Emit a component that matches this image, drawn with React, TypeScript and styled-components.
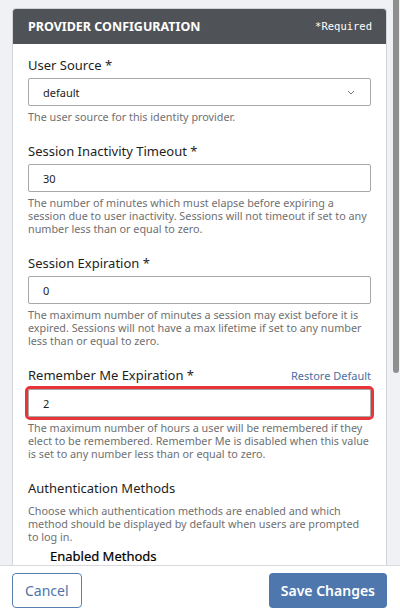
import styled, { createGlobalStyle } from "styled-components";

const GlobalStyle = createGlobalStyle`
  html, body {
    margin: 0;
    padding: 0;
    background: #f0f1f4;
    font-family: "Noto Sans", "Open Sans", sans-serif;
  }
`;

type Field = {
  label: string;
  value: string;
  help: string;
  restore?: boolean;
  invalid?: boolean;
};

const fields: Field[] = [
  {
    label: "Session Inactivity Timeout *",
    value: "30",
    help: "The number of minutes which must elapse before expiring a session due to user inactivity. Sessions will not timeout if set to any number less than or equal to zero.",
  },
  {
    label: "Session Expiration *",
    value: "0",
    help: "The maximum number of minutes a session may exist before it is expired. Sessions will not have a max lifetime if set to any number less than or equal to zero.",
  },
  {
    label: "Remember Me Expiration *",
    value: "2",
    help: "The maximum number of hours a user will be remembered if they elect to be remembered. Remember Me is disabled when this value is set to any number less than or equal to zero.",
    restore: true,
    invalid: true,
  },
];

const methods = ["Username / Password", "Security Key", "Authenticator App"];

export default function App() {
  return (
    <Page>
      <GlobalStyle />
      <Main>
        <Scroller>
          <Panel>
            <Header>
              <Title>Provider Configuration</Title>
              <Required>*Required</Required>
            </Header>
            <Body>
              <Group>
                <LabelRow>
                  <Label>User Source *</Label>
                </LabelRow>
                <Select>
                  <span>default</span>
                  <svg width="8" height="5" viewBox="0 0 8 5">
                    <path d="M1 1 L4 4 L7 1" fill="none" stroke="#777" strokeWidth="1" />
                  </svg>
                </Select>
                <Help>The user source for this identity provider.</Help>
              </Group>
              {fields.map((f) => (
                <Group key={f.label}>
                  <LabelRow>
                    <Label>{f.label}</Label>
                    {f.restore && <Restore>Restore Default</Restore>}
                  </LabelRow>
                  <Input defaultValue={f.value} invalid={!!f.invalid} />
                  <Help>{f.help}</Help>
                </Group>
              ))}
              <Group>
                <LabelRow>
                  <Label>Authentication Methods</Label>
                </LabelRow>
                <SectionHelp>
                  Choose which authentication methods are enabled and which method should be displayed by default when users are prompted to log in.
                </SectionHelp>
                <SubSection>
                  <SubTitle>Enabled Methods</SubTitle>
                  {methods.map((m) => (
                    <Check key={m}>
                      <Box />
                      {m}
                    </Check>
                  ))}
                </SubSection>
              </Group>
            </Body>
          </Panel>
        </Scroller>
        <Track>
          <Thumb />
        </Track>
      </Main>
      <Footer>
        <Cancel>Cancel</Cancel>
        <Save>Save Changes</Save>
      </Footer>
    </Page>
  );
}

const Page = styled.div`
  display: flex;
  flex-direction: column;
  height: 610px;
  overflow: hidden;
`;

const Main = styled.div`
  flex: 1;
  display: flex;
  min-height: 0;
`;

const Scroller = styled.div`
  flex: 1;
  overflow: hidden;
  padding: 8px 0 0 12px;
`;

const Track = styled.div`
  width: 13px;
  box-sizing: border-box;
  padding-left: 6px;
  background: #f0f1f4;
`;

const Thumb = styled.div`
  width: 6px;
  height: 373px;
  background: #8f8f8f;
  border-radius: 0 0 3px 3px;
`;

const Panel = styled.div`
  background: #fff;
  border: 1px solid #d2d4d8;
  border-bottom: none;
  border-radius: 4px 4px 0 0;
  overflow: hidden;
`;

const Header = styled.div`
  display: flex;
  align-items: center;
  justify-content: space-between;
  height: 36px;
  padding: 0 15px 0 16px;
  background: #4f5256;
  margin: -1px -1px 0;
`;

const Title = styled.div`
  color: #fff;
  font-size: 12.5px;
  font-weight: 700;
  text-transform: uppercase;
`;

const Required = styled.div`
  color: #fff;
  font-family: "DejaVu Sans Mono", monospace;
  font-size: 10.5px;
`;

const Body = styled.div`
  padding: 12px 15px 20px;
  display: flex;
  flex-direction: column;
  gap: 19px;
`;

const Group = styled.div`
  display: flex;
  flex-direction: column;
`;

const LabelRow = styled.div`
  display: flex;
  justify-content: space-between;
  align-items: baseline;
  line-height: 18px;
`;

const Label = styled.div`
  color: #1e1e1e;
  font-size: 13px;
`;

const Restore = styled.div`
  color: #4b6fa3;
  font-size: 11px;
`;

const Select = styled.div`
  display: flex;
  align-items: center;
  justify-content: space-between;
  height: 28px;
  margin-top: 4px;
  box-sizing: border-box;
  border: 1px solid #a8a8a8;
  border-radius: 2px;
  padding: 0 15px 0 14px;
  font-size: 11px;
  color: #222;
`;

const Input = styled.input<{ invalid: boolean }>`
  height: 28px;
  margin: 4px 0 0;
  box-sizing: border-box;
  border: 1px solid #a8a8a8;
  border-radius: 2px;
  padding: 0 14px;
  font-family: inherit;
  font-size: 11px;
  color: #222;
  outline: ${({ invalid }) => (invalid ? "3px solid #e8353b" : "none")};
`;

const Help = styled.div`
  margin-top: 4px;
  color: #707070;
  font-size: 10.8px;
  line-height: 13px;
`;

const SectionHelp = styled(Help)`
  margin-top: 7px;
`;

const SubSection = styled.div`
  padding: 3px 0 0 22px;
  display: flex;
  flex-direction: column;
  gap: 10px;
`;

const SubTitle = styled.div`
  color: #000;
  font-size: 13px;
  font-weight: 400;
  -webkit-text-stroke: 0.2px #000;
  line-height: 20px;
`;

const Check = styled.label`
  display: flex;
  align-items: center;
  gap: 8px;
  color: #1e1e1e;
  font-size: 12px;
`;

const Box = styled.span`
  width: 14px;
  height: 14px;
  border: 1px solid #a8a8a8;
  border-radius: 2px;
`;

const Footer = styled.div`
  display: flex;
  justify-content: space-between;
  align-items: flex-start;
  height: 45px;
  box-sizing: border-box;
  padding: 7px 13px 0 12px;
  background: #fff;
  border-top: 1px solid #d8dadd;
`;

const Cancel = styled.button`
  height: 35px;
  padding: 0 12px;
  background: #fff;
  border: 1px solid #5a80b0;
  border-radius: 4px;
  color: #4d74a8;
  font-family: inherit;
  font-size: 14px;
`;

const Save = styled.button`
  height: 35px;
  padding: 0 12px;
  background: #4e78ad;
  border: none;
  border-radius: 4px;
  color: #fff;
  font-family: inherit;
  font-size: 14px;
  font-weight: 600;
`;
